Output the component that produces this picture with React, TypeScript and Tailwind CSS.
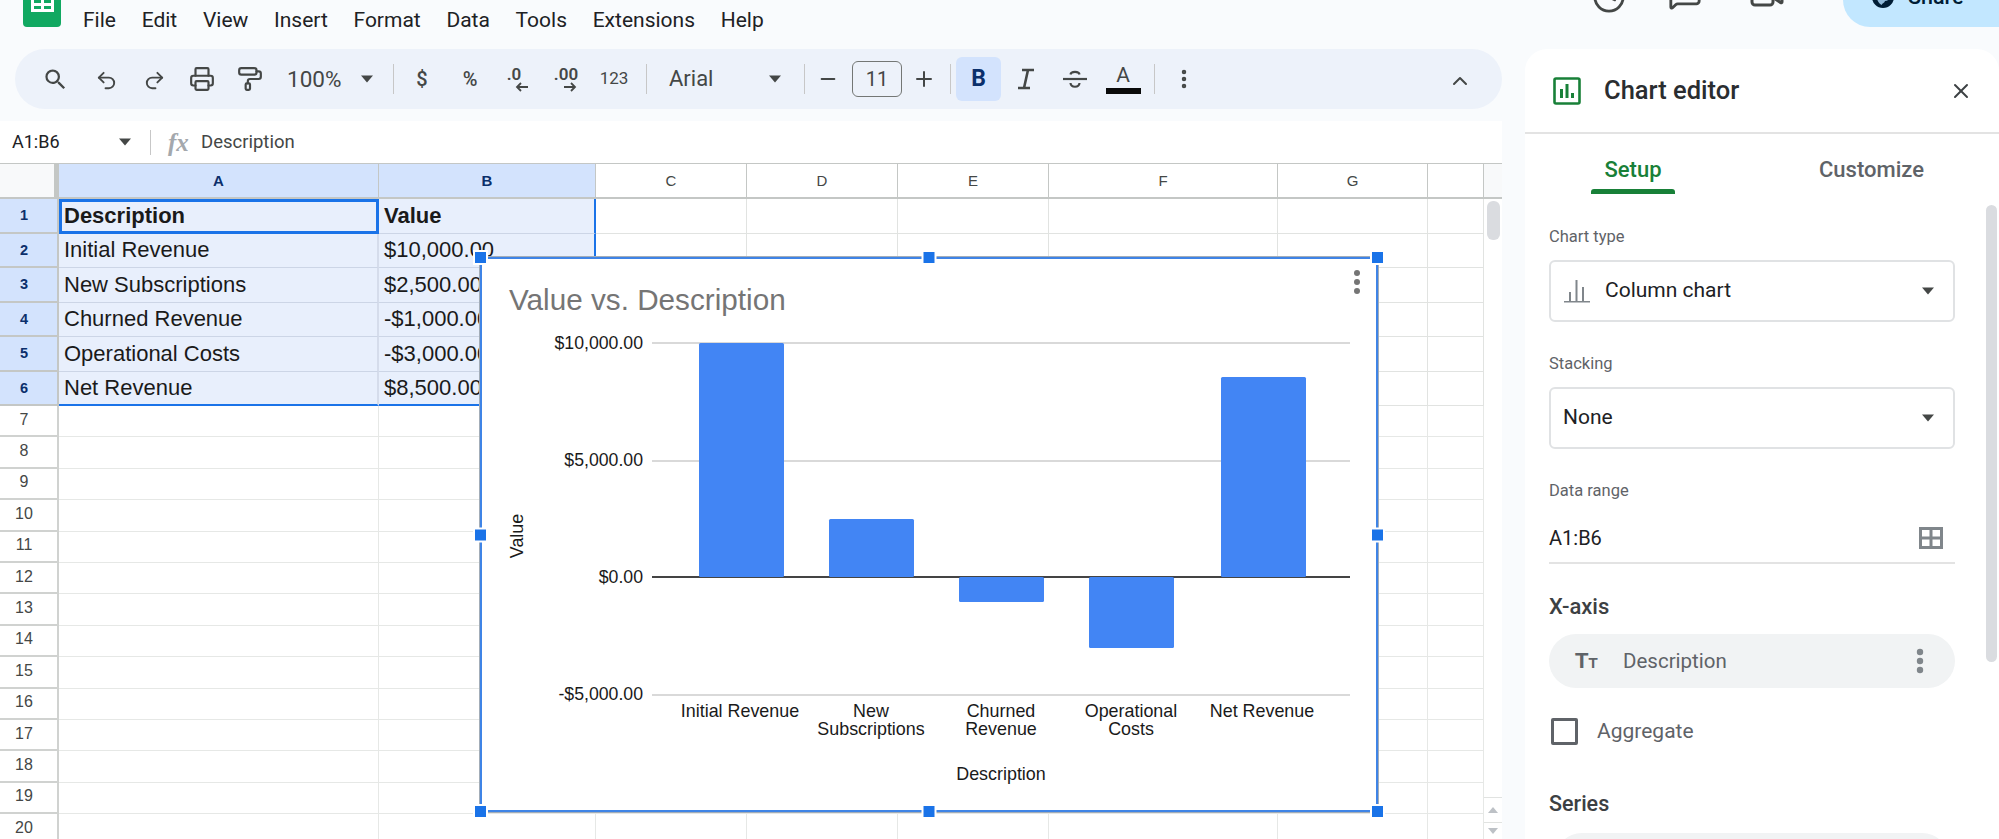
import { Undo2, Redo2, Printer, PaintRoller, Minus, Plus, EllipsisVertical, ChevronUp, X, Clock, MessageSquare, Video } from "lucide-react";

const Caret = ({ className = "" }: { className?: string }) => (
  <svg width="14" height="8" viewBox="0 0 14 8" className={className}>
    <path d="M1 0.5h12L7 7.5z" fill="currentColor" />
  </svg>
);

const Sep = ({ className = "" }: { className?: string }) => <div className={`w-px h-[30px] bg-[#c7c7c7] ${className}`} />;

const Slot = ({ w, children, className = "" }: { w: string; children: React.ReactNode; className?: string }) => (
  <div className={`flex items-center justify-center shrink-0 ${w} ${className}`}>{children}</div>
);

const menus = ["File", "Edit", "View", "Insert", "Format", "Data", "Tools", "Extensions", "Help"];

const Header = () => (
  <div className="h-[49px] flex items-start text-[#202124]">
    <svg width="38" height="27" viewBox="0 0 38 27" className="ml-[23px] shrink-0">
      <path d="M0 0h38v23a4 4 0 0 1-4 4H4a4 4 0 0 1-4-4z" fill="#11a861" />
      <path d="M8 0h23v12H8z" fill="#fff" />
      <path d="M11 0h7v3h-7zM21 0h7v3h-7zM11 6h7v3h-7zM21 6h7v3h-7z" fill="#11a861" />
    </svg>
    <div className="flex items-center h-[41px] ml-[22px] gap-[25.7px] text-[21px] leading-none">
      {menus.map((m) => (
        <span key={m}>{m}</span>
      ))}
    </div>
    <div className="ml-auto flex items-start text-[#444746]">
      <Clock size={34} strokeWidth={2} className="-mt-[20px] mr-[42px]" />
      <MessageSquare size={34} strokeWidth={2} className="-mt-[23px] mr-[47px]" />
      <Video size={36} strokeWidth={2} className="-mt-[22px] mr-[58px]" />
      <div className="-mt-[27px] h-[54px] w-[190px] -mr-[34px] rounded-[27px] bg-[#c2e7ff] flex items-center pl-[29px] text-[#001d35]">
        <svg width="22" height="22" viewBox="0 0 22 22" className="shrink-0 mt-[-6px]">
          <circle cx="11" cy="11" r="11" fill="currentColor" />
          <path d="M11 2.500c-2 1-3 3-2 4.500s3 1 3 3-2 1.500-3.500 1-3-2-4-3C4 12 6 17 9.500 19c1 -2 3 -2 3.500 -4 2 0 4 -1 5 -3 .5-4-2.500-8-7-9.500z" fill="#8fb8d8" />
        </svg>
        <span className="ml-[14px] text-[21.5px] font-medium mt-[-6px]">Share</span>
      </div>
    </div>
  </div>
);

const DecDown = () => (
  <div className="flex flex-col items-center leading-none text-[#444746]">
    <span className="text-[17px] font-semibold leading-[17px] -ml-[8px]">.0</span>
    <svg width="14" height="10" viewBox="0 0 14 10" className="ml-[8px] -mt-[1px]"><path d="M13 5H2M6 1 2 5l4 4" fill="none" stroke="currentColor" strokeWidth="1.8" /></svg>
  </div>
);

const DecUp = () => (
  <div className="flex flex-col items-center leading-none text-[#444746]">
    <span className="text-[17px] font-semibold leading-[17px]">.00</span>
    <svg width="14" height="10" viewBox="0 0 14 10" className="ml-[8px] -mt-[1px]"><path d="M1 5h11M8 1l4 4-4 4" fill="none" stroke="currentColor" strokeWidth="1.8" /></svg>
  </div>
);

const Toolbar = () => (
  <div className="ml-[15px] h-[60px] rounded-[30px] bg-[#edf2fa] flex items-center pl-[16px] text-[#444746]">
    <Slot w="w-[48px]" className="mr-[3px]">
      <svg width="27" height="27" viewBox="0 0 24 24" fill="currentColor">
        <path d="M15.5 14h-.79l-.28-.27A6.471 6.471 0 0 0 16 9.500 6.500 6.500 0 1 0 9.500 16c1.610 0 3.090-.59 4.230-1.570l.27.28v.79l5 4.990L20.490 19l-4.990-5zm-6 0C7.010 14 5 11.990 5 9.500S7.010 5 9.500 5 14 7.010 14 9.500 11.990 14 9.500 14z" />
      </svg>
    </Slot>
    <Slot w="w-[48px]"><Undo2 size={23} strokeWidth={2} className="mt-[3px]" /></Slot>
    <Slot w="w-[48px]"><Redo2 size={23} strokeWidth={2} className="mt-[3px]" /></Slot>
    <Slot w="w-[48px]"><Printer size={26} strokeWidth={2} /></Slot>
    <Slot w="w-[48px]"><PaintRoller size={26} strokeWidth={2} /></Slot>
    <span className="ml-[13px] w-[54px] text-[22.5px] leading-none whitespace-nowrap">100%</span>
    <Caret className="ml-[19px]" />
    <Sep className="ml-[19px]" />
    <Slot w="w-[48px]" className="ml-[4px] text-[20px] font-medium">$</Slot>
    <Slot w="w-[48px]" className="text-[20px] font-medium">%</Slot>
    <Slot w="w-[48px]"><DecDown /></Slot>
    <Slot w="w-[48px]"><DecUp /></Slot>
    <Slot w="w-[48px]" className="text-[17px]">123</Slot>
    <Sep className="ml-[8px]" />
    <span className="ml-[22px] w-[99px] text-[22px] leading-none">Arial</span>
    <Caret />
    <Sep className="ml-[22px]" />
    <Slot w="w-[46px]"><Minus size={22} strokeWidth={2} /></Slot>
    <div className="ml-[1px] w-[50px] h-[36px] rounded-[6px] border border-[#747775] flex items-center justify-center text-[20px]">11</div>
    <Slot w="w-[44px]"><Plus size={24} strokeWidth={2} /></Slot>
    <Sep className="ml-[4px]" />
    <div className="ml-[5px] w-[45px] h-[44px] rounded-[6px] bg-[#d3e3fd] flex items-center justify-center text-[23px] font-bold text-[#0b2f6b]">B</div>
    <Slot w="w-[50px]">
      <svg width="20" height="22" viewBox="0 0 20 22"><path d="M6 2h12M2 20h12M12 2 8 20" fill="none" stroke="currentColor" strokeWidth="2.600" /></svg>
    </Slot>
    <Slot w="w-[48px]">
      <svg width="26" height="24" viewBox="0 0 26 24" fill="none" stroke="currentColor" strokeWidth="2.200"><path d="M1 12h24" /><path d="M8.500 7.500C9 4 17 4 17.500 7.500" /><path d="M8.500 16c.5 5 8.500 5 9 0" /></svg>
    </Slot>
    <Slot w="w-[48px]">
      <div className="flex flex-col items-center">
        <span className="text-[21px] leading-[23px]">A</span>
        <div className="w-[35px] h-[6px] bg-[#0a0a0a] mt-[1px]" />
      </div>
    </Slot>
    <Sep className="ml-[7px]" />
    <Slot w="w-[48px]" className="ml-[5px]"><EllipsisVertical size={24} strokeWidth={2.5} /></Slot>
    <ChevronUp size={24} strokeWidth={2} className="ml-auto mr-[30px] mt-[3px]" />
  </div>
);

const FormulaBar = () => (
  <div className="mt-[12px] h-[42px] bg-white flex items-center text-[#202124]">
    <span className="ml-[12px] w-[106px] text-[18px] leading-none">A1:B6</span>
    <Caret className="text-[#444746]" />
    <div className="ml-[18px] w-px h-[25px] bg-[#c7c7c7]" />
    <span className="ml-[17px] w-[33px] text-[25px] leading-none italic font-bold text-[#a4a8ad] [font-family:'Liberation_Serif',serif]">fx</span>
    <span className="text-[18.5px] leading-none text-[#444746]">Description</span>
  </div>
);

const colW = ["w-[320px]", "w-[217px]", "w-[151px]", "w-[151px]", "w-[151px]", "w-[229px]", "w-[150px]", "w-[56px]"];
const colL = ["A", "B", "C", "D", "E", "F", "G", ""];
const data: [string, string][] = [
  ["Description", "Value"],
  ["Initial Revenue", "$10,000.00"],
  ["New Subscriptions", "$2,500.00"],
  ["Churned Revenue", "-$1,000.00"],
  ["Operational Costs", "-$3,000.00"],
  ["Net Revenue", "$8,500.00"],
];

const ColHeader = () => (
  <div className="flex h-[36px] border-t border-[#c4c7c5] border-b-2 border-b-[#c4c7c5]">
    <div className="w-[59px] shrink-0 bg-[#f8f9fa] border-r-[5px] border-r-[#c4c7c5]" />
    {colL.map((c, i) => (
      <div
        key={i}
        className={`${colW[i]} shrink-0 border-r border-[#c4c7c5] flex items-center justify-center text-[15px] leading-none [font-family:'Liberation_Sans',sans-serif] ${
          i < 2 ? "bg-[#d3e3fd] font-bold text-[#0b2f6b]" : "bg-white text-[#444746]"
        }`}
      >
        {c}
      </div>
    ))}
  </div>
);

const DataRow = ({ n, row }: { n: number; row: [string, string] }) => {
  const bold = n === 1;
  const last = n === 6;
  return (
    <div className="flex h-[34.5px] text-[22px] leading-none text-[#1a1a1a] [font-family:'Liberation_Sans',sans-serif]">
      <div className="w-[59px] shrink-0 bg-[#d3e3fd] border-r-2 border-b-2 border-[#c4c7c5] flex items-center justify-center pr-[9px] text-[14.5px] font-bold text-[#0b2f6b]">{n}</div>
      <div
        className={`w-[320px] shrink-0 bg-[#e8effc] flex items-center ${bold ? "font-bold border-[3px] border-[#1a73e8] pl-[2px]" : `pl-[5px] border-r-2 border-r-[#d5dceb] border-b ${last ? "border-b-2 border-b-[#1a73e8]" : "border-b-[#ccd5e6]"}`}`}
      >
        {row[0]}
      </div>
      <div
        className={`w-[217px] shrink-0 bg-[#e8effc] flex items-center pl-[5px] border-r-2 border-r-[#1a73e8] border-b ${last ? "border-b-2 border-b-[#1a73e8]" : "border-b-[#ccd5e6]"} ${bold ? "font-bold" : ""}`}
      >
        {row[1]}
      </div>
      {colW.slice(2).map((w, i) => (
        <div key={i} className={`${w} shrink-0 bg-white border-r border-b border-[#e1e3e1]`} />
      ))}
    </div>
  );
};

const EmptyRow = ({ n }: { n: number }) => (
  <div className="flex h-[31.4px]">
    <div className="w-[59px] shrink-0 bg-white border-r-2 border-b-2 border-[#d0d2d0] flex items-center justify-center pr-[9px] pb-[2px] text-[16px] leading-none text-[#444746] [font-family:'Liberation_Sans',sans-serif]">{n}</div>
    {colW.map((w, i) => (
      <div key={i} className={`${w} shrink-0 bg-white border-r border-b border-[#e6e8e6]`} />
    ))}
  </div>
);

const Handle = ({ className }: { className: string }) => (
  <div className={`absolute w-[11px] h-[11px] bg-[#1a73e8] shadow-[0_0_0_2px_#ffffff] ${className}`} />
);

const bars = [
  { x: 699, y: 343, h: 234 },
  { x: 829, y: 519, h: 58 },
  { x: 959, y: 577, h: 25 },
  { x: 1089, y: 577, h: 71 },
  { x: 1221, y: 377, h: 200 },
];

const Chart = () => (
  <div className="absolute left-[480px] top-[94px] w-[898px] h-[555px]">
    <div className="absolute inset-0 bg-white border-2 border-[#3f84e6] shadow-[0_0_0_1px_#a3adb8]">
      <svg viewBox="482 259 894 551" width="894" height="551" className="block [font-family:'Liberation_Sans',sans-serif]">
        <text x="509" y="310" fontSize="29.700" fill="#757575">Value vs. Description</text>
        {[343, 461, 695].map((y) => (
          <rect key={y} x="652" y={y - 1} width="698" height="2" fill="#d9d9d9" />
        ))}
        <rect x="652" y="576" width="698" height="2" fill="#444" />
        {bars.map((b) => (
          <rect key={b.x} x={b.x} y={b.y} width="85" height={b.h} rx="1.500" fill="#4285f4" />
        ))}
        <g fontSize="17.700" fill="#1a1a1a" textAnchor="end">
          <text x="643" y="349">$10,000.00</text>
          <text x="643" y="466">$5,000.00</text>
          <text x="643" y="583">$0.00</text>
          <text x="643" y="700">-$5,000.00</text>
        </g>
        <g fontSize="17.900" fill="#1a1a1a" textAnchor="middle">
          <text x="740" y="717">Initial Revenue</text>
          <text x="871" y="717">New</text>
          <text x="871" y="735">Subscriptions</text>
          <text x="1001" y="717">Churned</text>
          <text x="1001" y="735">Revenue</text>
          <text x="1131" y="717">Operational</text>
          <text x="1131" y="735">Costs</text>
          <text x="1262" y="717">Net Revenue</text>
          <text x="1001" y="780">Description</text>
          <text x="523" y="536" transform="rotate(-90 523 536)">Value</text>
        </g>
        <g fill="#757575">
          <circle cx="1357" cy="273" r="3" />
          <circle cx="1357" cy="282" r="3" />
          <circle cx="1357" cy="291" r="3" />
        </g>
      </svg>
    </div>
    <Handle className="-left-[5px] -top-[5px]" />
    <Handle className="left-1/2 -translate-x-1/2 -top-[5px]" />
    <Handle className="-right-[5px] -top-[5px]" />
    <Handle className="-left-[5px] top-1/2 -translate-y-1/2" />
    <Handle className="-right-[5px] top-1/2 -translate-y-1/2" />
    <Handle className="-left-[5px] -bottom-[5px]" />
    <Handle className="left-1/2 -translate-x-1/2 -bottom-[5px]" />
    <Handle className="-right-[5px] -bottom-[5px]" />
  </div>
);

const Rail = () => (
  <div className="w-[18px] shrink-0 bg-white flex flex-col">
    <div className="h-[36px] bg-[#f8f9fa] border-t border-b-2 border-[#c4c7c5]" />
    <div className="ml-[3px] mt-[2px] w-[13px] h-[39px] rounded-[6px] bg-[#dadce0]" />
    <div className="mt-auto h-[25px] border-t border-[#e1e3e1] flex items-center justify-center text-[#bdc1c6]">
      <svg width="10" height="6" viewBox="0 0 10 6"><path d="M5 0l5 6H0z" fill="currentColor" /></svg>
    </div>
    <div className="h-[17px] border-t border-[#e1e3e1] flex items-center justify-center text-[#bdc1c6]">
      <svg width="10" height="6" viewBox="0 0 10 6"><path d="M5 6 10 0H0z" fill="currentColor" /></svg>
    </div>
  </div>
);

const Sheet = () => (
  <div className="relative flex h-[676px] overflow-hidden">
    <div className="w-[1484px] shrink-0">
      <ColHeader />
      {data.map((r, i) => (
        <DataRow key={i} n={i + 1} row={r} />
      ))}
      {Array.from({ length: 14 }, (_, i) => i + 7).map((n) => (
        <EmptyRow key={n} n={n} />
      ))}
    </div>
    <Rail />
    <Chart />
  </div>
);

const Select = ({ icon, label, className = "" }: { icon?: React.ReactNode; label: string; className?: string }) => (
  <div className={`h-[62px] rounded-[6px] border-2 border-[#e0e2e4] flex items-center pl-[12px] pr-[18px] text-[21px] text-[#202124] ${className}`}>
    {icon}
    <span className="flex-1">{label}</span>
    <Caret className="text-[#444746]" />
  </div>
);

const Panel = () => (
  <div className="relative ml-[23px] w-[474px] h-[790px] rounded-t-[22px] bg-white overflow-hidden">
    <div className="h-[85px] border-b-2 border-[#e3e3e3] flex items-center pl-[28px] pr-[26px]">
      <svg width="28" height="28" viewBox="0 0 28 28" className="shrink-0">
        <rect x="1.500" y="1.500" width="25" height="25" rx="1.500" fill="none" stroke="#188038" strokeWidth="2.600" />
        <path d="M7 12h3v9H7zM12.500 7h3v14h-3zM18 16h3v5h-3z" fill="#188038" />
      </svg>
      <span className="ml-[23px] text-[25.5px] font-medium text-[#2a2d30] leading-none flex-1">Chart editor</span>
      <X size={24} strokeWidth={2} className="text-[#3c4043]" />
    </div>
    <div className="h-[61px] flex text-[22px] font-medium leading-none">
      <div className="ml-[66px] w-[84px] h-full flex flex-col items-center">
        <span className="mt-[25px] text-[#188038]">Setup</span>
        <div className="mt-[8px] w-[84px] h-[5px] rounded-t-[3px] bg-[#188038]" />
      </div>
      <span className="ml-[144px] mt-[25px] text-[#5f6368]">Customize</span>
    </div>
    <div className="ml-[24px] w-[406px]">
      <div className="mt-[32px] h-[20px] text-[16.5px] leading-[20px] text-[#5f6368]">Chart type</div>
      <Select
        className="mt-[13px]"
        label="Column chart"
        icon={
          <svg width="28" height="26" viewBox="0 0 28 26" className="mr-[14px] shrink-0" fill="#80868b">
            <path d="M1 23h26v1.500H1zM6 14h2v9H6zM12.500 2h2v21h-2zM19 9h2v14h-2z" />
          </svg>
        }
      />
      <div className="mt-[32px] h-[20px] text-[16.5px] leading-[20px] text-[#5f6368]">Stacking</div>
      <Select className="mt-[13px]" label="None" />
      <div className="mt-[32px] h-[20px] text-[16.5px] leading-[20px] text-[#5f6368]">Data range</div>
      <div className="mt-[15px] h-[48px] pb-[3px] border-b-2 border-[#e3e3e3] flex items-center justify-between pr-[12px] text-[20px] leading-none text-[#202124]">
        <span>A1:B6</span>
        <svg width="24" height="22" viewBox="0 0 24 22" fill="none" stroke="#80868b" strokeWidth="3">
          <rect x="1.500" y="1.500" width="21" height="19" /><path d="M12 1v20M1 11h22" />
        </svg>
      </div>
      <div className="mt-[31px] h-[24px] text-[22px] leading-[24px] font-medium text-[#3c4043]">X-axis</div>
      <div className="mt-[15px] h-[54px] rounded-[27px] bg-[#f1f3f4] flex items-center pl-[26px] pr-[30px] text-[#5f6368]">
        <span className="w-[48px] font-bold text-[22px] leading-none [font-family:'Liberation_Sans',sans-serif]">T<span className="text-[15px]">T</span></span>
        <span className="flex-1 text-[20.5px] leading-none">Description</span>
        <svg width="10" height="26" viewBox="0 0 10 26" fill="#80868b" className="shrink-0">
          <circle cx="5" cy="4" r="3.200" /><circle cx="5" cy="13" r="3.200" /><circle cx="5" cy="22" r="3.200" />
        </svg>
      </div>
      <div className="mt-[30px] h-[27px] flex items-center pl-[2px]">
        <div className="w-[27px] h-[27px] rounded-[2px] border-[3px] border-[#5f6368]" />
        <span className="ml-[19px] text-[21px] leading-none text-[#5f6368]">Aggregate</span>
      </div>
      <div className="mt-[47px] h-[24px] text-[21.5px] leading-[24px] font-medium text-[#3c4043]">Series</div>
      <div className="mt-[17px] mx-[6px] h-[54px] rounded-[27px] bg-[#f1f3f4]" />
    </div>
    <div className="absolute right-[2px] top-[156px] w-[11px] h-[457px] rounded-[6px] bg-[#dadce0]" />
  </div>
);

export default function App() {
  return (
    <div className="w-[1999px] h-[839px] overflow-hidden bg-[#f9fbfd] [font-family:'Roboto',sans-serif]">
      <Header />
      <div className="flex">
        <div className="w-[1502px] shrink-0">
          <Toolbar />
          <FormulaBar />
          <Sheet />
        </div>
        <Panel />
      </div>
    </div>
  );
}
